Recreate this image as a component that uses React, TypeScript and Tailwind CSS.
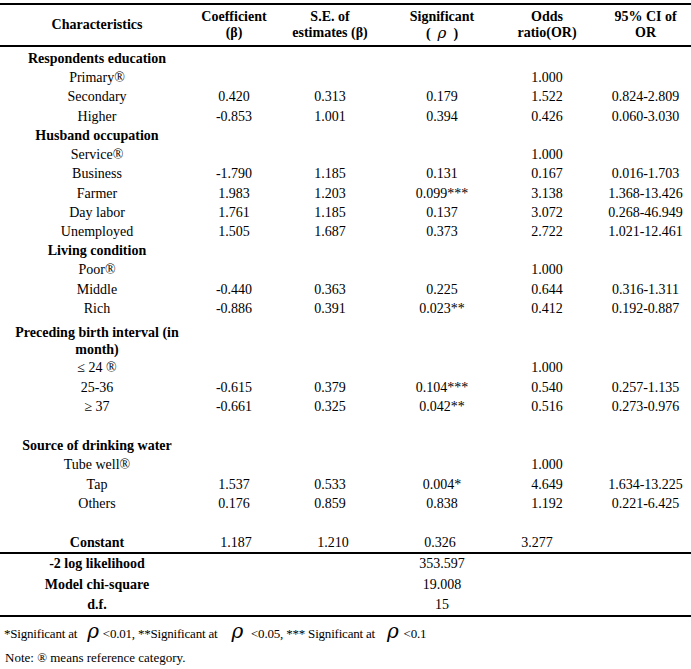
type Body = { label: string; bold?: boolean; vals?: string[]; two?: boolean };

const top: Body[] = [
  { label: "Respondents education", bold: true },
  { label: "Primary®", vals: ["", "", "", "1.000", ""] },
  { label: "Secondary", vals: ["0.420", "0.313", "0.179", "1.522", "0.824-2.809"] },
  { label: "Higher", vals: ["-0.853", "1.001", "0.394", "0.426", "0.060-3.030"] },
  { label: "Husband occupation", bold: true },
  { label: "Service®", vals: ["", "", "", "1.000", ""] },
  { label: "Business", vals: ["-1.790", "1.185", "0.131", "0.167", "0.016-1.703"] },
  { label: "Farmer", vals: ["1.983", "1.203", "0.099***", "3.138", "1.368-13.426"] },
  { label: "Day labor", vals: ["1.761", "1.185", "0.137", "3.072", "0.268-46.949"] },
  { label: "Unemployed", vals: ["1.505", "1.687", "0.373", "2.722", "1.021-12.461"] },
  { label: "Living condition", bold: true },
  { label: "Poor®", vals: ["", "", "", "1.000", ""] },
  { label: "Middle", vals: ["-0.440", "0.363", "0.225", "0.644", "0.316-1.311"] },
  { label: "Rich", vals: ["-0.886", "0.391", "0.023**", "0.412", "0.192-0.887"] },
]

const bottom: Body[] = [
  { label: "≤ 24 ®", vals: ["", "", "", "1.000", ""] },
  { label: "25-36", vals: ["-0.615", "0.379", "0.104***", "0.540", "0.257-1.135"] },
  { label: "≥ 37", vals: ["-0.661", "0.325", "0.042**", "0.516", "0.273-0.976"] },
  { label: "" },
  { label: "Source of drinking water", bold: true },
  { label: "Tube well®", vals: ["", "", "", "1.000", ""] },
  { label: "Tap", vals: ["1.537", "0.533", "0.004*", "4.649", "1.634-13.225"] },
  { label: "Others", vals: ["0.176", "0.859", "0.838", "1.192", "0.221-6.425"] },
  { label: "" },
]

const grid = "grid grid-cols-[194px_80px_112px_112px_98px_95px] text-center"

function Rho({ big }: { big?: boolean }) {
  return <span className={`italic font-['DejaVu_Serif',serif] font-normal ${big ? "text-[20px] leading-[16px]" : "text-[15px]"}`}>ρ</span>
}

function Row({ r, h }: { r: Body; h: string }) {
  return (
    <div className={`${grid} ${h}`}>
      <div className={r.bold ? "font-bold whitespace-nowrap" : ""}>{r.label}</div>
      {(r.vals ?? ["", "", "", "", ""]).map((v, j) => (
        <div key={j} className={j === 4 ? "pl-[4px]" : ""}>{v}</div>
      ))}
    </div>
  )
}

export default function App() {
  return (
    <div className="w-[691px] h-[669px] bg-white pt-[3px] font-['Liberation_Serif','Times_New_Roman',serif] text-[14px] text-black">
      {/* Header */}
      <div className={`${grid} h-[44px] border-y-2 border-black font-bold leading-[16px] items-center`}>
        <div>Characteristics</div>
        <div>Coefficient<br />(β)</div>
        <div>S.E. of<br />estimates (β)</div>
        <div>Significant<br /><span className="whitespace-pre">(  <Rho />  )</span></div>
        <div>Odds<br />ratio(OR)</div>
        <div className="pl-[4px]">95% CI of<br />OR</div>
      </div>

      {/* Body */}
      <div className="pt-[2px]">
        {top.map((r, i) => (
          <Row key={i} r={r} h="h-[19.23px] leading-[19.23px]" />
        ))}
        <div className={`${grid} pt-[6px] leading-[17px]`}>
          <div className="font-bold">Preceding birth interval (in<br />month)</div>
        </div>
        {bottom.map((r, i) => (
          <Row key={i} r={r} h="h-[19.44px] leading-[19.44px]" />
        ))}
        <div className={`${grid} h-[19.44px] leading-[19.44px]`}>
          <div className="font-bold">Constant</div>
          <div className="pl-[4px]">1.187</div>
          <div className="pl-[6px]">1.210</div>
          <div className="pr-[4px]">0.326</div>
          <div className="pr-[20px]">3.277</div>
          <div />
        </div>
      </div>

      {/* Model fit */}
      <div className="border-y-2 border-black">
        {[
          ["-2 log likelihood", "353.597"],
          ["Model chi-square", "19.008"],
          ["d.f.", "15"],
        ].map(([k, v]) => (
          <div key={k} className={`${grid} h-[20.3px] leading-[20.3px]`}>
            <div className="font-bold">{k}</div>
            <div />
            <div />
            <div>{v}</div>
            <div />
            <div />
          </div>
        ))}
      </div>

      {/* Notes */}
      <div className="flex items-center pl-[4px] pt-[5px] h-[27px] text-[13px] tracking-[-0.2px] whitespace-pre">
        <span>*Significant at</span>
        <span className="ml-[10px] mr-[4px]"><Rho big /></span>
        <span>&lt;0.01, **Significant at</span>
        <span className="ml-[14px] mr-[8px]"><Rho big /></span>
        <span>&lt;0.05, *** Significant at</span>
        <span className="ml-[12px] mr-[5px]"><Rho big /></span>
        <span>&lt;0.1</span>
      </div>
      <div className="pl-[5px] pt-[6px] text-[13px] leading-[16px]">
        Note: ® means reference category.
      </div>
    </div>
  )
}
